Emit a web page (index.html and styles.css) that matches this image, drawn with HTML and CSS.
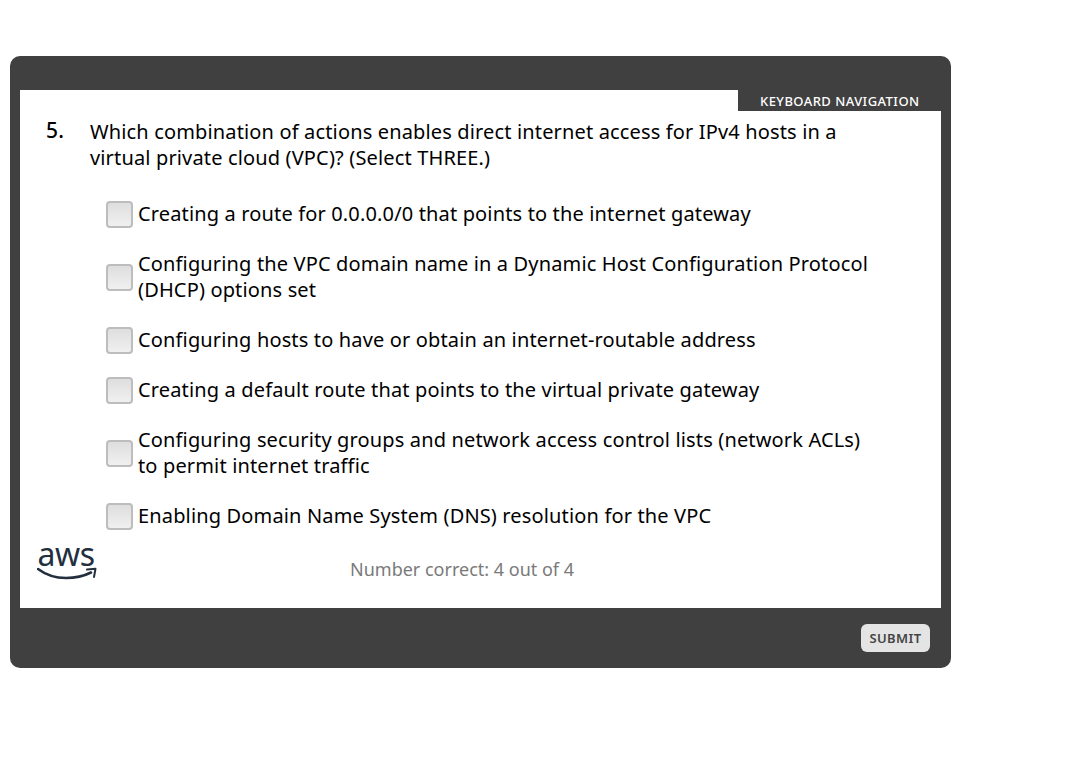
FILE: index.html
```html
<!DOCTYPE html>
<html lang="en">
<head>
    <meta charset="UTF-8">
    <meta name="viewport" content="width=device-width, initial-scale=1.0">
    <title>Knowledge Check</title>
    <link rel="stylesheet" href="styles.css">
</head>
<body>
<div class="quiz">
    <div class="panel">
        <div class="tab-row">
            <div class="keyboard-tab">KEYBOARD NAVIGATION</div>
        </div>
        <div class="question">
            <div class="question-number">5.</div>
            <div class="question-text">Which combination of actions enables direct internet access for IPv4 hosts in a virtual private cloud (VPC)? (Select THREE.)</div>
        </div>
        <div class="options">
            <label class="option"><span class="box"></span><span class="option-text">Creating a route for 0.0.0.0/0 that points to the internet gateway</span></label>
            <label class="option"><span class="box"></span><span class="option-text">Configuring the VPC domain name in a Dynamic Host Configuration Protocol (DHCP) options set</span></label>
            <label class="option"><span class="box"></span><span class="option-text">Configuring hosts to have or obtain an internet-routable address</span></label>
            <label class="option"><span class="box"></span><span class="option-text">Creating a default route that points to the virtual private gateway</span></label>
            <label class="option"><span class="box"></span><span class="option-text">Configuring security groups and network access control lists (network ACLs) to&nbsp;permit internet traffic</span></label>
            <label class="option"><span class="box"></span><span class="option-text">Enabling Domain Name System (DNS) resolution for the VPC</span></label>
        </div>
        <div class="panel-footer">
            <div class="logo">
                <span class="logo-text">aws</span>
                <svg class="logo-smile" width="60" height="16" viewBox="0 0 60 16">
                    <path d="M1 3C9 9 19 12 29 12C38 12 47 10 54 6.5" fill="none" stroke="#232f3e" stroke-width="2.6" stroke-linecap="round"/>
                    <path d="M50 3.6L58.5 2.8L57 11" fill="none" stroke="#232f3e" stroke-width="2" stroke-linejoin="round" stroke-linecap="round"/>
                </svg>
            </div>
            <div class="score">Number correct: 4 out of 4</div>
        </div>
    </div>
    <div class="bottom-bar">
        <button class="submit">SUBMIT</button>
    </div>
</div>
</body>
</html>
```

FILE: styles.css
```css
body {
    margin: 0;
    padding: 56px 0 0 10px;
    background-color: #fff;
    font-family: "Noto Sans", sans-serif;
    color: #000;
}

.quiz {
    width: 921px;
    padding: 34px 10px 0;
    background-color: #404040;
    border-radius: 10px;
}

.panel {
    height: 518px;
    background-color: #fff;
}

.tab-row {
    display: flex;
    justify-content: flex-end;
}

.keyboard-tab {
    width: 203px;
    height: 21px;
    padding-left: 22px;
    padding-top: 2px;
    box-sizing: border-box;
    background-color: #404040;
    color: #fff;
    font-size: 13px;
    font-weight: 500;
    letter-spacing: 0.45px;
    line-height: 19px;
}

.question {
    display: flex;
    margin-top: 8px;
    padding-left: 26px;
    font-size: 20px;
    line-height: 26px;
    letter-spacing: 0.15px;
}

.question-number {
    width: 44px;
    margin-top: -2px;
    font-size: 21px;
    font-weight: 500;
}

.question-text {
    width: 760px;
}

.options {
    display: flex;
    flex-direction: column;
    gap: 24px;
    margin-top: 30px;
    padding-left: 86px;
    font-size: 20px;
    line-height: 26px;
    letter-spacing: 0.15px;
}

.option {
    display: flex;
    align-items: center;
    gap: 5px;
}

.box {
    flex: none;
    width: 27px;
    height: 27px;
    margin-bottom: -1px;
    box-sizing: border-box;
    border: 2px solid #bdbdbd;
    border-radius: 4px;
    background: linear-gradient(#dedede, #f0f0f0);
}

.option-text {
    width: 745px;
}

.panel-footer {
    display: flex;
    align-items: flex-start;
    margin-top: 12px;
    padding-left: 17px;
}

.logo {
    width: 60px;
    height: 38px;
    color: #232f3e;
}

.logo-text {
    display: block;
    width: 58px;
    font-family: "Noto Sans", sans-serif;
    font-size: 32px;
    line-height: 26px;
    text-align: center;
    letter-spacing: -0.5px;
}

.logo-smile {
    display: block;
    margin-top: -1px;
}

.score {
    margin-left: 253px;
    margin-top: 16px;
    color: #7a7a7a;
    font-size: 18px;
    line-height: 24px;
}

.bottom-bar {
    display: flex;
    justify-content: flex-end;
    align-items: center;
    height: 60px;
    padding-right: 11px;
}

.submit {
    width: 69px;
    height: 28px;
    padding: 0;
    border: none;
    border-radius: 6px;
    background-color: #e4e4e4;
    color: #444;
    font-family: "Noto Sans", sans-serif;
    font-size: 13px;
    font-weight: 600;
    letter-spacing: 0.4px;
}
```
